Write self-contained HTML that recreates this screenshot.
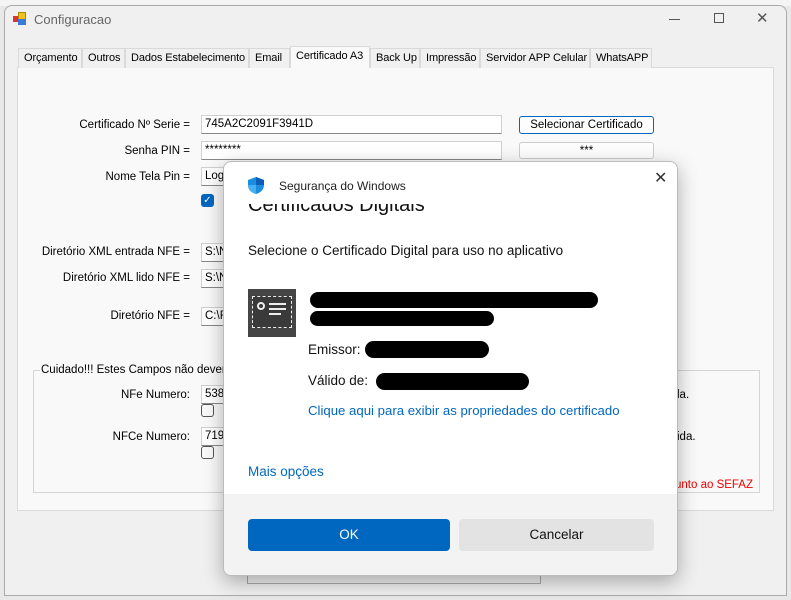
<!DOCTYPE html>
<html><head><meta charset="utf-8"><style>
*{box-sizing:border-box;margin:0;padding:0}
body{width:791px;height:600px;overflow:hidden;background:#e8e8e8;font-family:"Liberation Sans",sans-serif;font-size:11px;color:#000;position:relative}
.abs{position:absolute;white-space:nowrap}
.win{left:4px;top:5px;width:783px;height:591px;background:#f0f0f0;border:1px solid #aaa;border-radius:8px 8px 0 0}
.tab{position:absolute;top:48px;height:20px;border:1px solid #d9d9d9;border-bottom:none;background:#f0f0f0;font-size:11px;line-height:19px;padding:0 5px;color:#000;white-space:nowrap;overflow:hidden;letter-spacing:-0.1px}
.lbl{position:absolute;text-align:right;font-size:11.5px;width:180px;white-space:nowrap}
.tb{position:absolute;background:#fff;border:1px solid #d0d0d0;border-bottom:1px solid #888;height:19px;font-size:11.5px;line-height:17px;padding-left:3px;white-space:nowrap;overflow:hidden}
.btn{position:absolute;border:1px solid #ccc;background:#fdfdfd;border-radius:3px;text-align:center;font-size:11.5px;line-height:16px}
.blk{position:absolute;background:#000;border-radius:9px}
.dlg{left:223px;top:161px;width:455px;height:415px;background:#fff;border:1px solid #bbb;border-radius:8px;box-shadow:0 6px 20px rgba(0,0,0,.3);overflow:hidden}
.d{font-family:"Liberation Sans",sans-serif;font-size:13.5px}
</style></head><body>
<div class="abs" style="left:0;top:0;width:791px;height:6px;background:#f4f4f4"></div>
<div class="abs win"></div>
<div class="abs" style="left:13px;top:12px;width:14px;height:14px">
<div class="abs" style="left:0;top:4px;width:6px;height:6px;background:#d33"></div>
<div class="abs" style="left:5px;top:0;width:8px;height:8px;background:#f3c21a;border:1px solid #a80"></div>
<div class="abs" style="left:5px;top:7px;width:8px;height:6px;background:#3b7bd8"></div></div>
<div class="abs" style="left:34px;top:12px;font-size:13px;color:#666">Configuracao</div>
<div class="abs" style="left:669px;top:19px;width:11px;height:1px;background:#555"></div>
<div class="abs" style="left:714px;top:13px;width:10px;height:10px;border:1px solid #555"></div>
<div class="abs" style="left:756px;top:9px;font-size:15px;color:#555">✕</div>
<div class="abs" style="left:17px;top:67px;width:757px;height:444px;background:#f9f9f9;border:1px solid #dadada"></div>
<div class="tab" style="left:18px;width:64px">Orçamento</div>
<div class="tab" style="left:82px;width:43px">Outros</div>
<div class="tab" style="left:125px;width:124px">Dados Estabelecimento</div>
<div class="tab" style="left:249px;width:41px">Email</div>
<div class="tab" style="left:290px;top:46px;height:22px;width:80px;background:#f9f9f9">Certificado A3</div>
<div class="tab" style="left:370px;width:50px">Back Up</div>
<div class="tab" style="left:420px;width:60px">Impressão</div>
<div class="tab" style="left:480px;width:110px">Servidor APP Celular</div>
<div class="tab" style="left:590px;width:62px">WhatsAPP</div>
<div class="lbl" style="left:10px;top:119px">Certificado Nº Serie =</div>
<div class="lbl" style="left:10px;top:145px">Senha PIN =</div>
<div class="lbl" style="left:10px;top:171px">Nome Tela Pin =</div>
<div class="lbl" style="left:10px;top:246px">Diretório XML entrada NFE =</div>
<div class="lbl" style="left:10px;top:272px">Diretório XML lido NFE =</div>
<div class="lbl" style="left:10px;top:310px">Diretório NFE =</div>
<div class="tb" style="left:201px;top:115px;width:301px">745A2C2091F3941D</div>
<div class="tb" style="left:201px;top:141px;width:301px">********</div>
<div class="tb" style="left:201px;top:167px;width:40px">Logo</div>
<div class="abs" style="left:201px;top:194px;width:13px;height:13px;background:#0067c0;border-radius:3px;color:#fff;font-size:10px;line-height:13px;text-align:center">✓</div>
<div class="tb" style="left:201px;top:243px;width:40px">S:\N</div>
<div class="tb" style="left:201px;top:269px;width:40px">S:\N</div>
<div class="tb" style="left:201px;top:307px;width:40px">C:\F</div>
<div class="btn" style="left:519px;top:116px;width:135px;height:18px;border-color:#0067c0">Selecionar Certificado</div>
<div class="btn" style="left:519px;top:142px;width:135px;height:17px">***</div>
<div class="abs" style="left:33px;top:370px;width:727px;height:123px;border:1px solid #d5d5d5"></div>
<div class="abs" style="left:40px;top:364px;background:#f9f9f9;padding:0 1px;font-size:11.5px">Cuidado!!! Estes Campos não devem s</div>
<div class="lbl" style="left:10px;top:389px">NFe Numero:</div>
<div class="lbl" style="left:10px;top:431px">NFCe Numero:</div>
<div class="tb" style="left:201px;top:385px;width:40px">538</div>
<div class="tb" style="left:201px;top:427px;width:40px">719</div>
<div class="abs" style="left:201px;top:404px;width:13px;height:13px;border:1px solid #555;border-radius:3px"></div>
<div class="abs" style="left:201px;top:446px;width:13px;height:13px;border:1px solid #555;border-radius:3px"></div>
<div class="abs" style="left:677px;top:389px;font-size:11.5px">la.</div>
<div class="abs" style="left:677px;top:431px;font-size:11.5px">ida.</div>
<div class="abs" style="left:675px;top:479px;color:#e00;font-size:11.5px">unto ao SEFAZ</div>
<div class="abs" style="left:247px;top:560px;width:294px;height:24px;border:1px solid #aaa;background:#f0f0f0"></div>
<div class="abs dlg">
<svg class="abs" style="left:24px;top:15px" width="16" height="17" viewBox="0 0 16 17"><path d="M8 0 L16 3 V8 C16 13 12 16 8 17 C4 16 0 13 0 8 V3 Z" fill="#1a8fe0"/><path d="M8 0 L16 3 V8 H8 Z" fill="#0a5db8"/><path d="M0 8 H8 V17 C4 16 0 13 0 8Z" fill="#48b0f0"/></svg>
<div class="abs d" style="left:55px;top:17px;font-size:12px;color:#222">Segurança do Windows</div>
<div class="abs" style="left:430px;top:6px;font-size:16px;color:#333">✕</div>
<div class="abs d" style="left:24px;top:42px;font-size:20px;height:20px;overflow:hidden;line-height:30px;color:#111"><span style="position:relative;top:-14px">Certificados Digitais</span></div>
<div class="abs d" style="left:24px;top:81px;color:#111">Selecione o Certificado Digital para uso no aplicativo</div>
<div class="abs" style="left:24px;top:127px;width:48px;height:48px;background:#454545">
<div class="abs" style="left:4px;top:7px;width:40px;height:32px;border:1.5px dashed #eee;background:#3a3a3a"></div>
<div class="abs" style="left:9px;top:13px;width:8px;height:8px;border:2px solid #eee;border-radius:50%"></div>
<div class="abs" style="left:21px;top:14px;width:17px;height:2px;background:#eee"></div>
<div class="abs" style="left:21px;top:19px;width:17px;height:2px;background:#eee"></div>
<div class="abs" style="left:21px;top:24px;width:12px;height:2px;background:#eee"></div></div>
<div class="blk" style="left:86px;top:130px;width:288px;height:16px"></div>
<div class="blk" style="left:86px;top:149px;width:184px;height:15px"></div>
<div class="abs d" style="left:84px;top:180px;color:#111">Emissor:</div>
<div class="blk" style="left:141px;top:179px;width:124px;height:17px"></div>
<div class="abs d" style="left:84px;top:211px;color:#111">Válido de:</div>
<div class="blk" style="left:152px;top:211px;width:153px;height:17px"></div>
<div class="abs d" style="left:84px;top:241px;color:#0067c0;font-size:13.2px">Clique aqui para exibir as propriedades do certificado</div>
<div class="abs d" style="left:24px;top:302px;color:#0067c0">Mais opções</div>
<div class="abs" style="left:0;top:332px;width:455px;height:83px;background:#f3f3f3"></div>
<div class="abs d" style="left:24px;top:357px;width:202px;height:32px;background:#0067c0;border-radius:4px;color:#fff;text-align:center;line-height:32px">OK</div>
<div class="abs d" style="left:235px;top:357px;width:195px;height:32px;background:#e3e3e3;border-radius:4px;color:#111;text-align:center;line-height:32px">Cancelar</div>
</div>
</body></html>
